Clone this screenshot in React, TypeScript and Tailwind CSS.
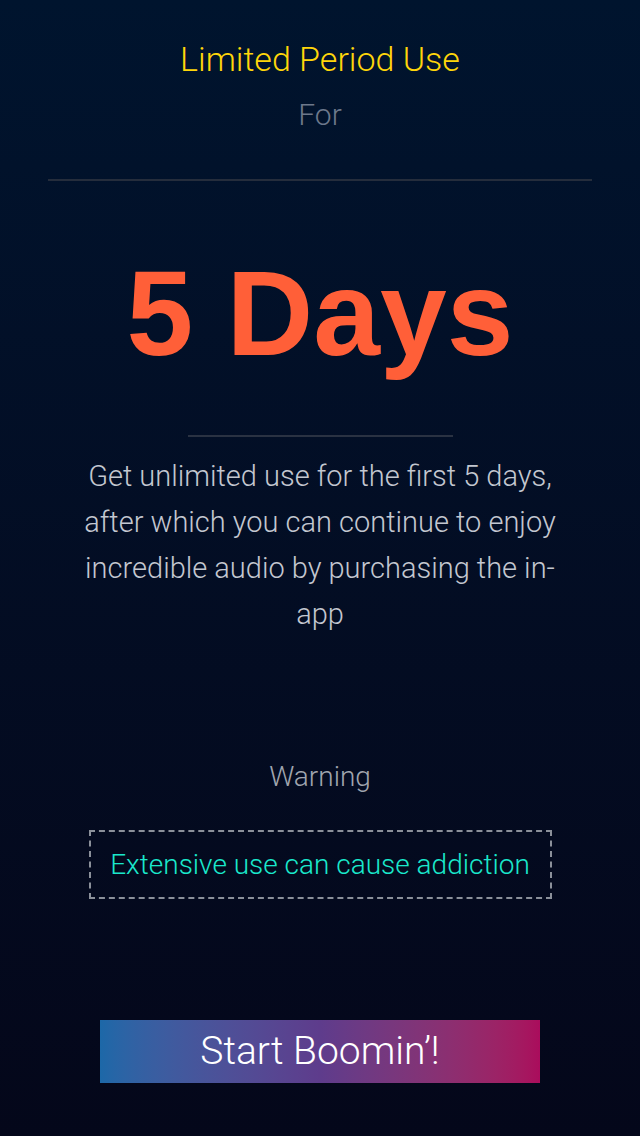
export default function App() {
  return (
    <div
      className="flex min-h-[1136px] w-full flex-col items-center bg-gradient-to-b from-[#00142e] to-[#04071a] text-center"
      style={{ fontFamily: 'Roboto, "Open Sans", sans-serif' }}
    >
      {/* Header */}
      <h1 className="pt-[39px] text-[34px] font-light leading-[40px] text-[#ffd60a]">
        Limited Period Use
      </h1>
      <p className="mt-4 text-[30px] font-light leading-[40px] text-[#6d788b]">For</p>

      <div className="mt-[44px] h-[2px] w-[544px] bg-[#252d3c]" />

      {/* Big number */}
      <h2
        className="mt-[72px] text-[120px] font-bold leading-[120px] text-[#ff5f38]"
        style={{ fontFamily: '"Liberation Sans", Arial, sans-serif' }}
      >
        5 Days
      </h2>

      <div className="mt-[62px] h-[2px] w-[265px] bg-[#2a3242]" />

      <p className="mt-[16px] w-[490px] text-[29px] font-light leading-[46px] text-[#c3c7d0]">
        Get unlimited use for the first 5 days, after which you can continue to enjoy incredible
        audio by purchasing the in-app
      </p>

      {/* Warning */}
      <p className="mt-[120px] text-[28px] font-light leading-[40px] text-[#a0a5af]">Warning</p>
      <div className="mt-[33px] flex h-[69px] w-[463px] items-center justify-center border-2 border-dashed border-[#8b909a]">
        <span className="text-[28px] font-light text-[#1ae8cc]">
          Extensive use can cause addiction
        </span>
      </div>

      {/* CTA */}
      <button className="mt-[121px] flex h-[63px] w-[440px] items-center justify-center bg-gradient-to-r from-[#1c68a8] via-[#5e3c8c] to-[#aa0c5c] text-[39px] font-light text-white">
        Start Boomin’!
      </button>
    </div>
  )
}
